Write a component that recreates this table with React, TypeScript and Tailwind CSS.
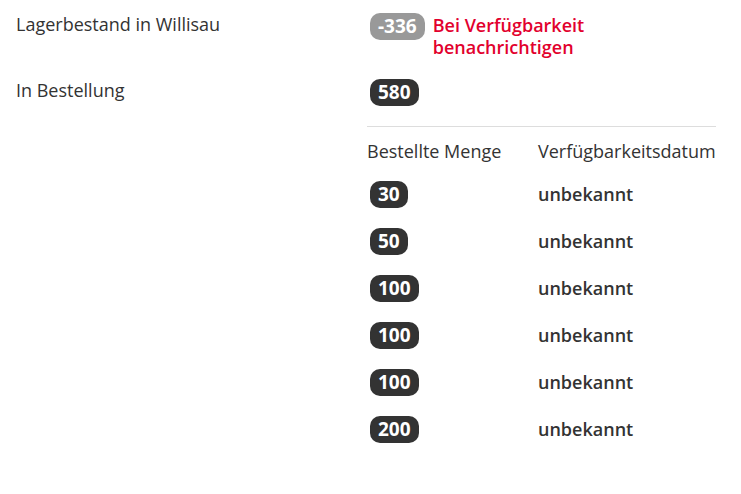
import React from "react";

const Badge = ({ children, grey }: { children: React.ReactNode; grey?: boolean }) => (
  <span
    className={`inline-flex h-[27px] items-center rounded-[10px] px-[8px] text-[19px] font-bold leading-none text-white ${grey ? "bg-[#999999]" : "bg-[#333333]"}`}
  >
    {children}
  </span>
);

export default function App() {
  const rows = ["30", "50", "100", "100", "100", "200"];
  return (
    <div className="min-h-[494px] w-[741px] bg-white text-[#333] font-['Open_Sans',sans-serif] text-[18px]">
      <div className="flex pt-[13px]">
        <div className="w-[367px] pl-[16px] leading-[22px]">Lagerbestand in Willisau</div>
        <div className="flex items-start gap-[8px] pl-[3px]">
          <Badge grey>-336</Badge>
          <div className="pt-[1px] text-[18px] font-semibold leading-[22px] text-[#e2002d]">
            Bei Verfügbarkeit
            <br />
            benachrichtigen
          </div>
        </div>
      </div>
      <div className="flex pt-[21px]">
        <div className="w-[367px] pl-[16px] leading-[22px]">In Bestellung</div>
        <div className="flex flex-col">
          <div className="pl-[3px]">
            <Badge>580</Badge>
          </div>
          <div className="mt-[20px] w-[349px] border-t border-[#dddddd]" />
          <div className="flex pt-[13px] leading-[22px]">
            <div className="w-[171px]">Bestellte Menge</div>
            <div>Verfügbarkeitsdatum</div>
          </div>
          <div className="mt-[19px] flex flex-col gap-[20px]">
            {rows.map((r, i) => (
              <div key={i} className="flex items-center">
                <div className="w-[171px] pl-[3px]">
                  <Badge>{r}</Badge>
                </div>
                <div className="font-semibold">unbekannt</div>
              </div>
            ))}
          </div>
        </div>
      </div>
    </div>
  );
}
